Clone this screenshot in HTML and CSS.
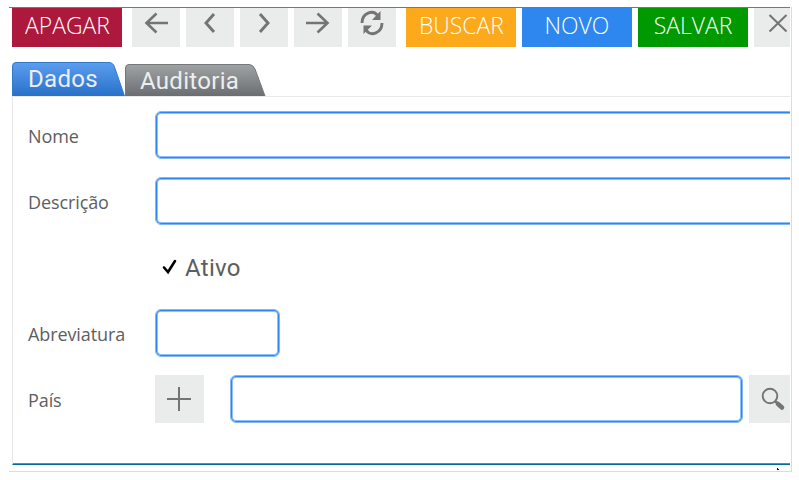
FILE: index.html
```html
<!DOCTYPE html>
<html lang="pt">
<head>
<meta charset="utf-8">
<title>Cadastro</title>
<link rel="stylesheet" href="styles.css">
</head>
<body>
<main class="window">
  <div class="view">
    <div class="toolbar">
      <button class="action delete"><span>APAGAR</span></button>
      <div class="nav">
        <button class="icon" aria-label="Primeiro"><svg viewBox="0 0 48 39"><path d="M36 15H14M24.500 5.500L14.500 15L24.500 24.500"/></svg></button>
        <button class="icon" aria-label="Anterior"><svg viewBox="0 0 48 39"><path class="bold" d="M28 6L20 15L28 24"/></svg></button>
        <button class="icon" aria-label="Seguinte"><svg viewBox="0 0 48 39"><path class="bold" d="M20 6L28 15L20 24"/></svg></button>
        <button class="icon" aria-label="Último"><svg viewBox="0 0 48 39"><path d="M12 15H34M23.500 5.500L33.500 15L23.500 24.500"/></svg></button>
        <button class="icon" aria-label="Atualizar"><svg viewBox="0 0 48 39"><path class="bold" d="M14 15C14 5 25 1 30 8M34 15C34 25 23 29 18 22"/><path class="solid" d="M32.500 3V12H24ZM15.500 26V17.500H24Z"/></svg></button>
      </div>
      <div class="actions">
        <button class="action search"><span>BUSCAR</span></button>
        <button class="action new"><span>NOVO</span></button>
        <button class="action save"><span>SALVAR</span></button>
        <button class="icon" aria-label="Fechar"><svg viewBox="0 0 48 39"><path class="thin" d="M15.500 7L32.500 23.500M32.500 7L15.500 23.500"/></svg></button>
      </div>
    </div>
    <nav class="tabs">
      <div class="tab active">
        <svg viewBox="0 0 113 34"><defs><linearGradient id="blue" x2="0" y2="1"><stop stop-color="#5b9df0"/><stop offset="1" stop-color="#2871c8"/></linearGradient></defs><path fill="url(#blue)" stroke="#3479c6" d="M.5 34V4Q.5.5 4 .5H97Q101 .5 102.500 5L112.500 34"/></svg>
        <span>Dados</span>
      </div>
      <div class="tab other">
        <svg viewBox="0 0 141 32"><defs><linearGradient id="gray" x2="0" y2="1"><stop stop-color="#a0a3a4"/><stop offset="1" stop-color="#6a6e71"/></linearGradient></defs><path fill="url(#gray)" stroke="#74787a" d="M.5 32V4Q.5.5 4 .5H124Q128 .5 130 5L140 32"/></svg>
        <span>Auditoria</span>
      </div>
    </nav>
    <form class="panel">
      <div class="row"><label>Nome</label><div class="field wide"></div></div>
      <div class="row"><label>Descrição</label><div class="field wide"></div></div>
      <div class="row check"><svg viewBox="0 0 16 18"><path d="M2 9.500L6 14L13 3"/></svg><span>Ativo</span></div>
      <div class="row"><label>Abreviatura</label><div class="field short"></div></div>
      <div class="row"><label>País</label><button type="button" class="icon add" aria-label="Adicionar"><svg viewBox="0 0 49 48"><path class="thin" d="M12 24H36M24 12V36"/></svg></button><div class="field country"></div><button type="button" class="icon lookup" aria-label="Pesquisar"><svg viewBox="0 0 48 48"><circle class="lens" cx="21" cy="21" r="7.300"/><path d="M26 26L29 29"/><path class="handle" d="M29 29L33 32.500"/></svg></button></div>
    </form>
  </div>
  <svg class="grip" viewBox="0 0 2 2"><path d="M0 0H1V1H2V2H0Z"/></svg>
</main>
</body>
</html>
```
FILE: styles.css
```css
* { box-sizing: border-box; }
body { margin: 0; background: #fff; overflow: hidden; color: #5c5e5f; }
.window { position: relative; width: 783px; height: 465px; margin: 7px 0 0 9px; border-right: 1px solid #dcdcdc; border-bottom: 1px solid #dcdcdc; }
.view { width: 781px; height: 458px; border-top: 1px solid #777; padding-left: 3px; overflow: hidden; }
button { border: 0; padding: 0; margin: 0; flex-shrink: 0; }
.toolbar { display: flex; gap: 10px; height: 39px; }
.nav, .actions { display: flex; gap: 6px; flex-shrink: 0; }
.action { width: 110px; height: 39px; color: #fff; font: 300 24px/33px "Open Sans", sans-serif; white-space: nowrap; display: flex; justify-content: center; }
.action span { transform: scaleX(.955); }
.delete { background: #ad193c; }
.search { background: #fca91b; }
.new { background: #2e87ee; }
.save { background: #009900; }
.icon { display: block; width: 48px; height: 39px; background: #eaeceb; }
svg { display: block; }
.icon svg { width: 100%; height: 100%; fill: none; stroke: #747474; stroke-width: 2.6; }
.icon .bold { stroke-width: 2.900; }
.icon .thin { stroke-width: 2; }
.icon .lens { stroke-width: 1.900; }
.icon .solid { fill: #747474; stroke: none; }
.tabs { display: flex; align-items: flex-end; height: 34px; margin-top: 15px; }
.tab { display: grid; color: #eceff1; font: 24px/35px Roboto, sans-serif; }
.tab > * { grid-area: 1 / 1; }
.tab span { padding-left: 16px; letter-spacing: .3px; }
.active { width: 113px; height: 34px; }
.active svg { width: 113px; height: 34px; }
.other { width: 141px; height: 32px; }
.other span { padding-left: 15px; }
.other svg { width: 141px; height: 32px; }
.panel { position: relative; height: 369px; border-top: 1px solid #e8e8e8; border-left: 1px solid #e8e8e8; border-bottom: 1px solid #08699b; box-shadow: inset 0 -1px #7c8589; padding-top: 14px; display: flex; flex-direction: column; gap: 18px; }
.row { display: flex; height: 48px; flex-shrink: 0; }
label { width: 142px; padding-left: 15px; font: 18px/50px "Open Sans", sans-serif; letter-spacing: -.1px; flex-shrink: 0; }
.field { height: 48px; border: 1px solid #80b7f8; border-radius: 6px; box-shadow: inset 0 0 0 1px #2e87ee, inset 0 0 0 2px #8fc0f9; flex-shrink: 0; background: #fff; }
.wide { width: 650px; }
.short { width: 125px; }
.add { width: 49px; height: 48px; }
.country { width: 513px; margin-left: 26px; }
.lookup { height: 48px; margin-left: 6px; }
.icon .handle { stroke-width: 4.500; stroke-linecap: round; }
.check { padding-left: 149px; font: 24px/50px Roboto, sans-serif; letter-spacing: .3px; }
.check svg { width: 16px; height: 18px; margin: 15px 7px 0 0; fill: none; stroke: #000; stroke-width: 2.600; stroke-linecap: round; }
.grip { position: absolute; left: 768px; top: 461px; width: 2px; height: 2px; fill: #0000cc; }
```
